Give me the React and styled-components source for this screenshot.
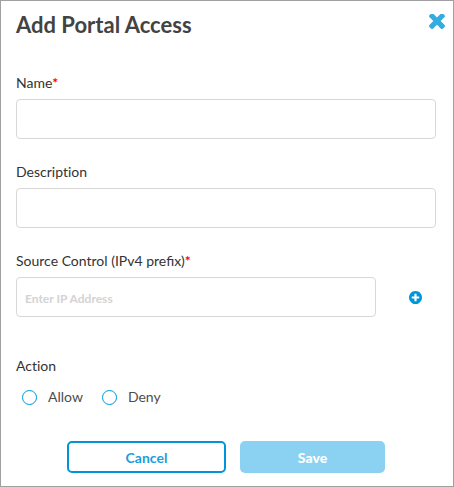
import { useState } from "react";
import styled, { createGlobalStyle } from "styled-components";

const GlobalStyle = createGlobalStyle`
	*,
	*::before,
	*::after {
		box-sizing: border-box;
	}

	body {
		margin: 0;
		background-color: #ffffff;
		color: #333333;
		font-family: Lato, "Liberation Sans", sans-serif;
		font-size: 14px;
		line-height: 20px;
	}

	button,
	input {
		font-family: inherit;
	}
`;

const Dialog = styled.form`
	min-height: 100vh;
	padding: 8px 17px 12px 15px;
	border: 1px solid #a0a0a0;
	background-color: #ffffff;
`;

const Header = styled.header`
	display: flex;
	align-items: center;
	justify-content: space-between;
	margin: 0 -13px 32px 0;
`;

const Title = styled.h1`
	margin: 0;
	color: #434343;
	font-size: 22px;
	font-weight: 700;
	line-height: 32px;
`;

const IconButton = styled.button`
	display: flex;
	align-items: center;
	justify-content: center;
	padding: 4px;
	border: none;
	background: none;
	color: ${({ $color }) => $color};
	cursor: pointer;
`;

const CloseButton = styled(IconButton)`
	align-self: flex-start;
	padding-top: 5px;
`;

const Fields = styled.div`
	display: flex;
	flex-direction: column;
	gap: 23px;
`;

const Field = styled.div`
	display: flex;
	flex-direction: column;
	gap: 6px;
`;

const Label = styled.label`
	font-variant-ligatures: ${({ $ligatures }) => ($ligatures ? "normal" : "none")};
`;

const Required = styled.span`
	color: #ff0000;
	font-weight: 700;
`;

const InputRow = styled.div`
	display: flex;
	align-items: center;
	gap: 29px;
	padding-right: 10px;
`;

const TextInput = styled.input`
	flex-grow: 1;
	min-width: 0;
	height: 40px;
	padding: 0 8px;
	border: 1px solid #d8d8d8;
	border-radius: 4px;
	background-color: #ffffff;
	color: #333333;
	font-size: 14px;

	&::placeholder {
		color: #d3d3d3;
		font-size: 12px;
		font-weight: 700;
		opacity: 1;
	}
`;

const ActionGroup = styled.fieldset`
	margin: 39px 0 0;
	padding: 0;
	border: none;
`;

const Legend = styled.legend`
	padding: 0;
	font-variant-ligatures: none;
`;

const Options = styled.div`
	display: flex;
	gap: 19px;
	padding: 11px 6px 0;
`;

const Option = styled.label`
	display: flex;
	align-items: center;
	gap: 11px;
	color: #4d4d4d;
`;

const Radio = styled.input`
	appearance: none;
	width: 15px;
	height: 15px;
	margin: 0;
	border: 1px solid #0095d9;
	border-radius: 50%;

	&:checked {
		background-color: #0095d9;
		box-shadow: inset 0 0 0 3px #ffffff;
	}
`;

const Footer = styled.footer`
	display: flex;
	justify-content: center;
	gap: 14px;
	margin-top: 34px;
`;

const Button = styled.button`
	width: ${({ $primary }) => ($primary ? "145px" : "159px")};
	height: 32px;
	border: ${({ $primary }) => ($primary ? "none" : "2px solid #0095d9")};
	border-radius: 5px;
	background-color: ${({ $primary }) => ($primary ? "#8bd1f1" : "#ffffff")};
	color: ${({ $primary }) => ($primary ? "#ffffff" : "#1b9ddb")};
	font-size: 14px;
	font-weight: ${({ $primary }) => ($primary ? "900" : "700")};
	cursor: pointer;
`;

const CloseIcon = () => (
	<svg width="16" height="16" viewBox="302 434 1188 1188" fill="currentColor" aria-hidden="true">
		<path d="M1490 1322q0 40-28 68l-136 136q-28 28-68 28t-68-28l-294-294-294 294q-28 28-68 28t-68-28l-136-136q-28-28-28-68t28-68l294-294-294-294q-28-28-28-68t28-68l136-136q28-28 68-28t68 28l294 294 294-294q28-28 68-28t68 28l136 136q28 28 28 68t-28 68l-294 294 294 294q28 28 28 68z" />
	</svg>
);

const PlusCircleIcon = () => (
	<svg width="13" height="13" viewBox="128 128 1536 1536" fill="currentColor" aria-hidden="true">
		<path d="M1344 960v-128q0-26-19-45t-45-19h-256v-256q0-26-19-45t-45-19h-128q-26 0-45 19t-19 45v256h-256q-26 0-45 19t-19 45v128q0 26 19 45t45 19h256v256q0 26 19 45t45 19h128q26 0 45-19t19-45v-256h256q26 0 45-19t19-45zm320-64q0 209-103 385.5t-279.5 279.5-385.5 103-385.5-103-279.5-279.5-103-385.5 103-385.5 279.5-279.5 385.5-103 385.5 103 279.5 279.5 103 385.5z" />
	</svg>
);

export default function App() {
	const [action, setAction] = useState("");

	const handleSubmit = (event) => {
		event.preventDefault();
	};

	return (
		<>
			<GlobalStyle />
			<Dialog onSubmit={handleSubmit}>
				<Header>
					<Title>Add Portal Access</Title>
					<CloseButton type="button" $color="#35ace0" aria-label="Close">
						<CloseIcon />
					</CloseButton>
				</Header>

				<Fields>
					<Field>
						<Label htmlFor="name">
							Name<Required>*</Required>
						</Label>
						<TextInput id="name" type="text" />
					</Field>
					<Field>
						<Label htmlFor="description">Description</Label>
						<TextInput id="description" type="text" />
					</Field>
					<Field>
						<Label htmlFor="source" $ligatures>
							Source Control (IPv4 prefix)<Required>*</Required>
						</Label>
						<InputRow>
							<TextInput id="source" type="text" placeholder="Enter IP Address" />
							<IconButton type="button" $color="#0095d9" aria-label="Add">
								<PlusCircleIcon />
							</IconButton>
						</InputRow>
					</Field>
				</Fields>

				<ActionGroup>
					<Legend>Action</Legend>
					<Options>
						{["Allow", "Deny"].map((option) => (
							<Option key={option}>
								<Radio
									type="radio"
									name="action"
									value={option}
									checked={action === option}
									onChange={() => setAction(option)}
								/>
								{option}
							</Option>
						))}
					</Options>
				</ActionGroup>

				<Footer>
					<Button type="button">Cancel</Button>
					<Button type="submit" $primary>
						Save
					</Button>
				</Footer>
			</Dialog>
		</>
	);
}
